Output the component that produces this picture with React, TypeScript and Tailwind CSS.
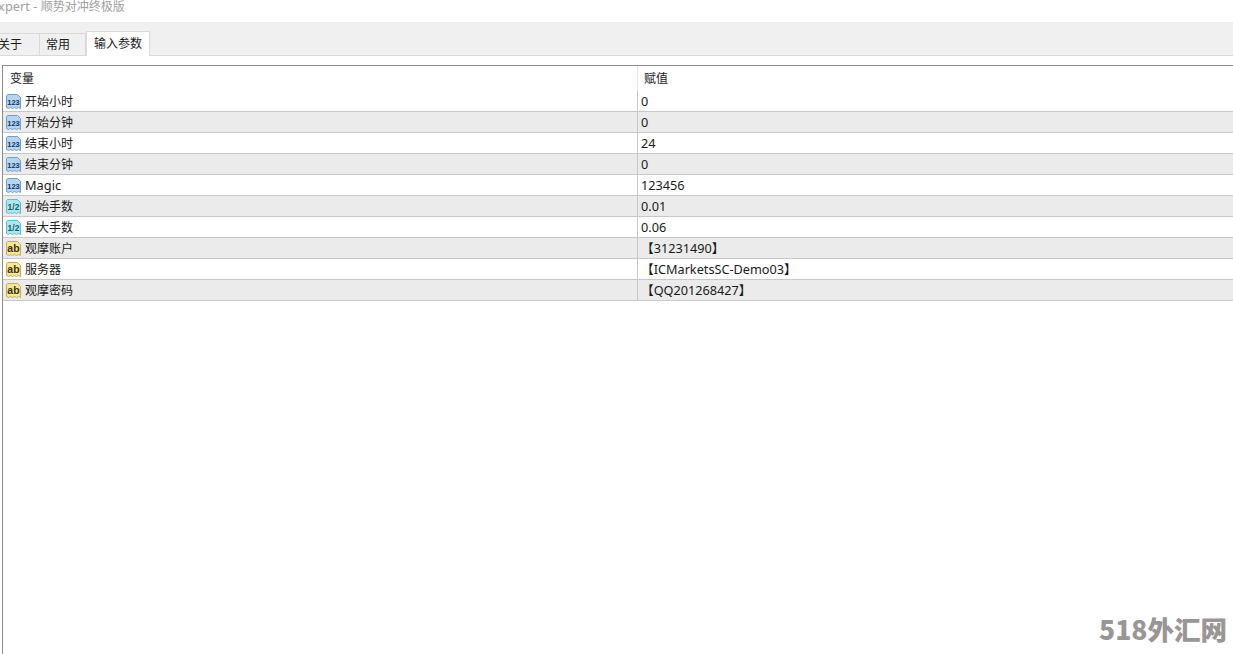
import React from "react";

type Kind = "int" | "dbl" | "str";

const rows: { name: string; value: string; kind: Kind }[] = [
  { name: "开始小时", value: "0", kind: "int" },
  { name: "开始分钟", value: "0", kind: "int" },
  { name: "结束小时", value: "24", kind: "int" },
  { name: "结束分钟", value: "0", kind: "int" },
  { name: "Magic", value: "123456", kind: "int" },
  { name: "初始手数", value: "0.01", kind: "dbl" },
  { name: "最大手数", value: "0.06", kind: "dbl" },
  { name: "观摩账户", value: "【31231490】", kind: "str" },
  { name: "服务器", value: "【ICMarketsSC-Demo03】", kind: "str" },
  { name: "观摩密码", value: "【QQ201268427】", kind: "str" },
];

const iconStyle: Record<Kind, { fill: string; stroke: string; text: string; label: string; size: number }> = {
  int: { fill: "#b5d4f0", stroke: "#6f9fd0", text: "#0f3560", label: "123", size: 7.5 },
  dbl: { fill: "#aee6f0", stroke: "#5dbdd0", text: "#14606f", label: "1/2", size: 8.5 },
  str: { fill: "#f4e69c", stroke: "#c6ad52", text: "#3d3105", label: "ab", size: 10.5 },
};

// 종이 모양 타입 아이콘
const TypeIcon = ({ kind }: { kind: Kind }) => {
  const s = iconStyle[kind];
  return (
    <svg width="17" height="17" viewBox="0 0 17 17" className="shrink-0">
      <path
        d="M2.5 1.5H12.5L15.5 4.5V15.5L13.5 14.5L11.5 15.5L9.5 14.5L7.5 15.5L5.5 14.5L3.5 15.5L1.5 14.5V2.5Z"
        fill={s.fill}
        stroke={s.stroke}
        strokeLinejoin="round"
      />
      <text
        x="8.5"
        y="11.7"
        textAnchor="middle"
        fontSize={s.size}
        fontWeight="700"
        fontFamily="'Liberation Sans', sans-serif"
        fill={s.text}
      >
        {s.label}
      </text>
    </svg>
  );
};

const font = { fontFamily: "'Noto Sans', 'Noto Sans CJK SC', sans-serif" };

export default function App() {
  return (
    <div
      className="relative flex h-[654px] w-[1233px] flex-col overflow-hidden bg-white text-[12px] text-[#1a1a1a]"
      style={font}
    >
      {/* 제목 */}
      <div className="h-[22px] shrink-0 overflow-hidden">
        <div className="ml-[-9px] mt-[-1px] whitespace-nowrap text-[12.8px] leading-[14px] text-[#a0a0a0]">
          Expert - <span className="text-[12px]">顺势对冲终极版</span>
        </div>
      </div>

      {/* 탭 */}
      <div className="flex h-[34px] shrink-0 items-end border-b border-[#d9d9d9] bg-[#f0f0f0]">
        <div className="ml-[-10px] flex h-[22px] w-[50px] items-center justify-start border-r border-t border-[#d9d9d9] pl-[8px] pt-[1px]">
          关于
        </div>
        <div className="flex h-[22px] w-[46px] items-center border-r border-t border-[#d9d9d9] pl-[6px] pt-[1px]">
          常用
        </div>
        <div className="z-10 mb-[-1px] flex h-[25px] w-[64px] items-center justify-center border-x border-t border-[#d9d9d9] bg-white">
          输入参数
        </div>
      </div>

      {/* 표 */}
      <div className="ml-[2px] mt-[9px] flex min-h-0 flex-1 flex-col border-l border-t border-[#8c8c8c]">
        <div className="flex h-[25px] shrink-0 items-center">
          <div className="w-[634px] pl-[7px] pt-[1px]">变量</div>
          <div className="h-full border-l border-[#e4e4e4] pl-[6px] pt-[4px]">赋值</div>
        </div>
        {rows.map((row, i) => (
          <div
            key={row.name}
            className={`flex h-[21px] shrink-0 border-b border-[#c8c8c8] ${i % 2 === 1 ? "bg-[#ebebeb]" : "bg-white"}`}
          >
            <div className="flex w-[634px] items-center gap-[3px] pl-[2px]">
              <TypeIcon kind={row.kind} />
              <span className={`pt-[2px] ${row.name === "Magic" ? "text-[12.8px]" : "text-[12px]"}`}>{row.name}</span>
            </div>
            <div className="flex items-center border-l border-[#c8c8c8] pl-[3px] pt-[2px] text-[12.7px]">{row.value}</div>
          </div>
        ))}
      </div>

      {/* 워터마크 */}
      <div
        className="absolute right-[6px] top-[610px] text-[26.5px] font-black leading-[38px] text-[#9a9696]"
        style={{ fontFamily: "'Noto Sans CJK SC', sans-serif" }}
      >
        518外汇网
      </div>
    </div>
  );
}
